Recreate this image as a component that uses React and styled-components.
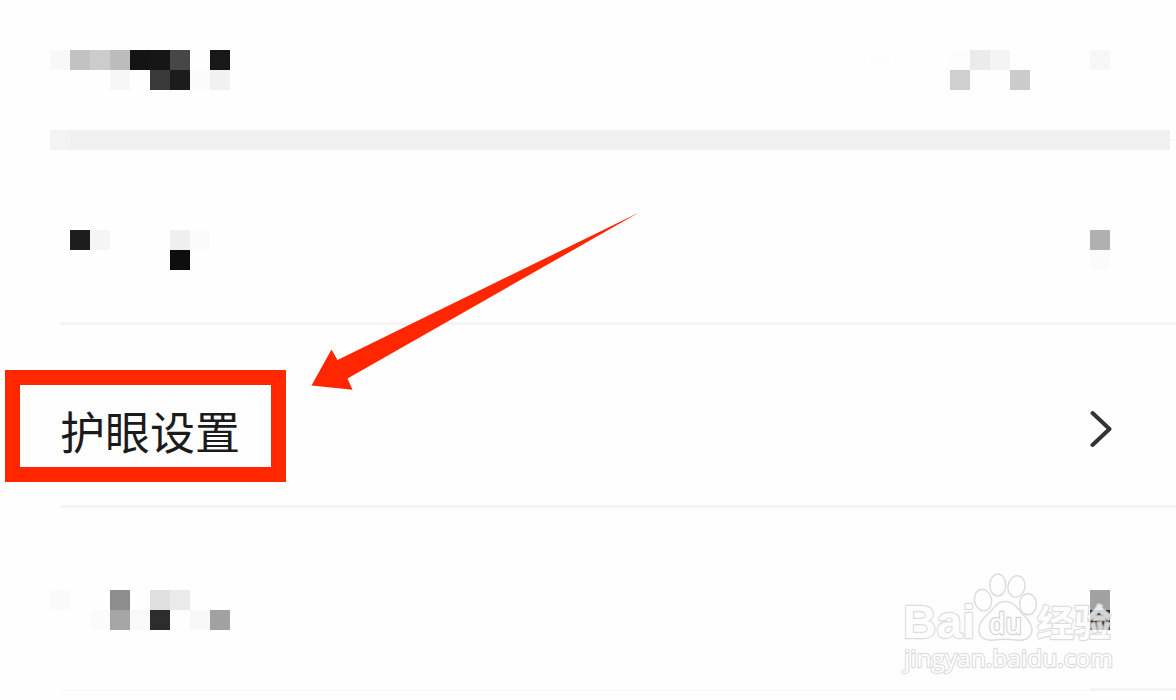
import React from "react";
import styled, { createGlobalStyle } from "styled-components";

const GlobalStyle = createGlobalStyle`
  * { box-sizing: border-box; }
  body { margin: 0; background: #fefefe; overflow: hidden; }
`;

const Screen = styled.main`
  position: relative;
  display: flex;
  flex-direction: column;
  width: 1176px;
  height: 700px;
  overflow: hidden;
  background: #fefefe;
  font-family: "Noto Sans CJK SC", sans-serif;
`;

const Row = styled.section`
  display: flex;
  flex: none;
  justify-content: space-between;
  align-items: flex-start;
  height: ${(p) => p.$height}px;
  padding: ${(p) => p.$top}px 66px 0 50px;
`;

const Divider = styled.div`
  flex: none;
  height: 3px;
  margin-left: 60px;
  background: #f4f4f4;
`;

const Band = styled.div`
  display: flex;
  align-items: center;
  flex: none;
  height: 20px;
  padding-left: 50px;
`;

const BandPart = styled.div`
  flex: ${(p) => (p.$width ? "none" : "1")};
  width: ${(p) => p.$width}px;
  height: ${(p) => p.$height}px;
  background: ${(p) => p.$color};
`;

const MosaicGrid = styled.div`
  display: grid;
  grid-template-columns: repeat(${(p) => p.$columns}, 20px);
  grid-auto-rows: 20px;
`;

const Cell = styled.span`
  background: ${(p) => p.$color};
`;

const SettingRow = styled(Row)`
  padding-left: 60px;
  padding-right: 64px;
`;

const Label = styled.span`
  font-size: 45px;
  line-height: 56px;
  color: #1b1b1b;
  white-space: nowrap;
`;

const Chevron = styled.svg`
  width: 24px;
  height: 40px;
  margin-top: 6px;
`;

const Footer = styled.div`
  display: flex;
  align-items: flex-end;
  flex: none;
  height: 3px;
  padding-left: 60px;
`;

const Highlight = styled.div`
  position: absolute;
  left: 5px;
  top: 370px;
  width: 281px;
  height: 112px;
  border: 15px solid #ff2600;
`;

const Arrow = styled.svg`
  position: absolute;
  left: 300px;
  top: 200px;
`;

const Watermark = styled.svg`
  position: absolute;
  left: 890px;
  top: 560px;
  opacity: 0.8;
`;

const MarkText = styled.text`
  font-family: ${(p) => p.$family};
  font-size: ${(p) => p.$size}px;
  font-weight: ${(p) => p.$weight};
  stroke-width: 2.4px;
  paint-order: stroke;
`;

function Mosaic({ rows }) {
  return (
    <MosaicGrid $columns={rows[0].length}>
      {rows.flat().map((shade, i) => (
        <Cell key={i} $color={shade ? `#${shade}` : "transparent"} />
      ))}
    </MosaicGrid>
  );
}

const latin = '"Open Sans", sans-serif';
const chinese = '"Noto Sans CJK SC", sans-serif';

function BaiduMark() {
  return (
    <Watermark width="240" height="130" viewBox="0 0 240 130">
      <g fill="#fff" stroke="#d6d6d6" strokeWidth="1.5" strokeLinejoin="round">
        <ellipse cx="93" cy="40" rx="8.5" ry="10.8" transform="rotate(-12 93 40)" />
        <ellipse cx="107.8" cy="25" rx="8" ry="11" />
        <ellipse cx="126.500" cy="26.500" rx="8.500" ry="10.800" transform="rotate(10 126.5 26.5)" />
        <ellipse cx="138" cy="44.300" rx="8.500" ry="10.500" />
        <path d="M115 41.500C124 41.500 127 48 132 53.500C138 59 142 64 142 70C141 79 134 81 126 80C119 79 111 79 104 80C96 81 89 78 89 70C89 64 93 58 99 53C105 47 107 41.500 115 41.500Z" />
        <MarkText x="13" y="78" $family={'"Liberation Sans", sans-serif'} $size={47} $weight={700} textLength="72" lengthAdjust="spacingAndGlyphs">Bai</MarkText>
        <MarkText x="99" y="74" stroke="#c8c8c8" $family={latin} $size={28} $weight={600} textLength="33" lengthAdjust="spacingAndGlyphs">du</MarkText>
        <MarkText x="147" y="77" $family={chinese} $size={37} $weight={700} textLength="74" lengthAdjust="spacingAndGlyphs">经验</MarkText>
        <MarkText x="14" y="107" $family={latin} $size={24.5} $weight={500} textLength="209" lengthAdjust="spacingAndGlyphs">jingyan.baidu.com</MarkText>
      </g>
    </Watermark>
  );
}

export default function App() {
  return (
    <>
      <GlobalStyle />
      <Screen>
        <Row $height={130} $top={50}>
          <Mosaic
            rows={[
              ["f8f8f8", "c2c2c2", "cccccc", "bcbcbc", "141414", "161616", "474747", null, "181818"],
              [null, null, null, "f7f7f7", null, "393939", "1c1c1c", "fbfbfb", "f1f1f1"],
            ]}
          />
          <Mosaic
            rows={[
              ["fdfdfd", null, null, null, "fcfcfc", "ebebeb", "f4f4f4", null, null, null, null, "f7f7f7"],
              [null, null, null, null, "cfcfcf", null, null, "cbcbcb", null, null, null, null],
            ]}
          />
        </Row>
        <Band>
          <BandPart $width={20} $height={20} $color="#f3f3f3" />
          <BandPart $height={20} $color="#f0f0f0" />
          <BandPart $width={6} $height={2} $color="#f7f7f7" />
        </Band>
        <Row $height={172} $top={80}>
          <Mosaic
            rows={[
              [null, "1d1d1d", "f5f5f5", null, null, null, "efefef", "fbfbfb"],
              [null, null, null, null, null, null, "0e0e0e", null],
            ]}
          />
          <Mosaic rows={[["b0b0b0"], ["fbfbfb"]]} />
        </Row>
        <Divider />
        <SettingRow $height={180} $top={78}>
          <Label>护眼设置</Label>
          <Chevron viewBox="0 0 24 40" fill="none" stroke="#333" strokeWidth="4" strokeLinecap="round" strokeLinejoin="round">
            <path d="M4.500 4L21.500 20L4.500 36" />
          </Chevron>
        </SettingRow>
        <Divider />
        <Row $height={180} $top={82}>
          <Mosaic
            rows={[
              ["fafafa", null, null, "8d8d8d", null, "e0e0e0", "eaeaea", null, null],
              [null, null, "fbfbfb", "a5a5a5", "f9f9f9", "2d2d2d", null, "f8f8f8", "a1a1a1"],
            ]}
          />
          <Mosaic rows={[["a1a1a1"], ["303030"]]} />
        </Row>
        <Footer>
          <BandPart $height={1} $color="#f6f6f6" />
          <BandPart $width={86} $height={3} $color="#f4f4f4" />
        </Footer>
        <Highlight />
        <Arrow width="350" height="200" viewBox="0 0 350 200">
          <path fill="#ff2600" d="M339 12.500L37.500 160L31.500 149.500L11.500 185.500L52.500 189.800L47.500 178.500Z" />
        </Arrow>
        <BaiduMark />
      </Screen>
    </>
  );
}
